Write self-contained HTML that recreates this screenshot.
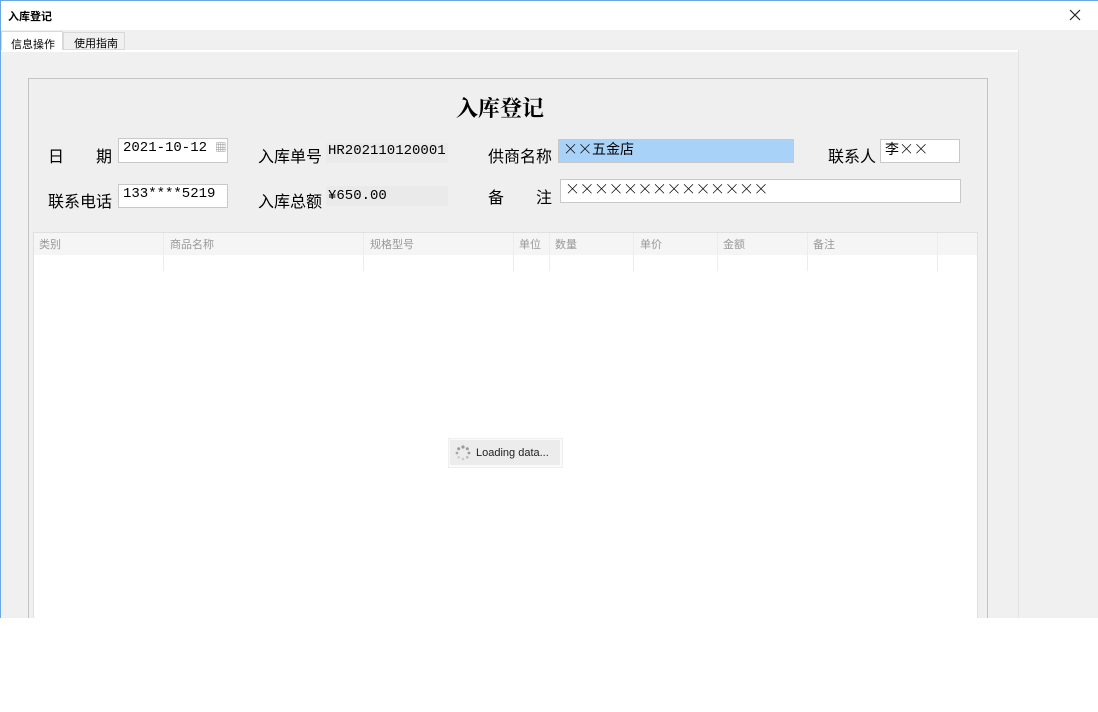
<!DOCTYPE html>
<html><head><meta charset="utf-8"><style>
*{margin:0;padding:0;box-sizing:border-box}
body{width:1098px;height:712px;background:#fff;position:relative;overflow:hidden;font-family:"Liberation Sans","Noto Sans CJK SC",sans-serif;}
.a{position:absolute}
.t{font-size:16px;color:#000;white-space:nowrap}
.box{position:absolute;background:#fff;border:1px solid #c8c8c8;font-size:14px;padding-left:4px;line-height:18px;white-space:nowrap;font-family:"Liberation Mono","Noto Sans CJK SC",monospace}
.x{font-family:"Noto Sans CJK SC",sans-serif;font-size:15px;font-weight:300;letter-spacing:-0.5px}
.hd{position:absolute;top:236px;font-size:11px;color:#999}
.sep{position:absolute;top:233px;width:1px;height:38px;background:#ececec}
</style></head><body>
<div class="a" style="left:0;top:0;width:1098px;height:1px;background:#6aa8e0"></div>
<div class="a" style="left:0;top:0;width:1px;height:618px;background:#6aa8e0"></div>
<div class="a t" style="left:8px;top:8px;font-size:11px;font-weight:bold">入库登记</div>
<svg class="a" style="left:1069px;top:9px" width="12" height="12"><path d="M1 1L11 11M11 1L1 11" stroke="#222" stroke-width="1.2"/></svg>
<div class="a" style="left:1px;top:30px;width:1097px;height:588px;background:#f0f0f0"></div>
<div class="a" style="left:1px;top:31px;width:62px;height:21px;background:#fff;border:1px solid #d9d9d9;border-bottom:none;font-size:11px;padding:4px 0 0 9px">信息操作</div>
<div class="a" style="left:63px;top:32px;width:62px;height:18px;background:#f0f0f0;border:1px solid #d9d9d9;font-size:11px;padding:2px 0 0 10px">使用指南</div>
<div class="a" style="left:1px;top:50px;width:1017px;height:2px;background:#fff"></div>
<div class="a" style="left:1018px;top:50px;width:1px;height:568px;background:#e3e3e3"></div>
<div class="a" style="left:28px;top:78px;width:960px;height:545px;border:1px solid #c4c4c4;background:#efefef"></div>
<div class="a" style="left:456px;top:92px;font-size:22px;font-weight:bold;font-family:'Noto Serif CJK SC',serif">入库登记</div>
<div class="a t" style="left:48px;top:143px">日</div><div class="a t" style="left:96px;top:143px">期</div>
<div class="box" style="left:118px;top:138px;width:110px;height:25px">2021-10-12 <span style="font-size:11px;color:#777">▦</span></div>
<div class="a t" style="left:258px;top:143px">入库单号</div>
<div class="a" style="left:326px;top:143px;width:122px;height:20px;background:#eaeaea;font-size:14px;font-family:'Liberation Mono',monospace;padding-left:2px">HR202110120001</div>
<div class="a t" style="left:488px;top:143px">供商名称</div>
<div class="box" style="left:558px;top:139px;width:236px;height:24px;background:#a9d2f8"><span class="x">××</span>五金店</div>
<div class="a t" style="left:828px;top:143px">联系人</div>
<div class="box" style="left:880px;top:139px;width:80px;height:24px">李<span class="x">××</span></div>
<div class="a t" style="left:48px;top:188px">联系电话</div>
<div class="box" style="left:118px;top:184px;width:110px;height:24px">133****5219</div>
<div class="a t" style="left:258px;top:188px">入库总额</div>
<div class="a" style="left:326px;top:186px;width:122px;height:20px;background:#eaeaea;font-size:14px;font-family:'Liberation Mono',monospace;padding-left:2px;padding-top:2px">¥650.00</div>
<div class="a t" style="left:488px;top:184px">备</div><div class="a t" style="left:536px;top:184px">注</div>
<div class="box" style="left:560px;top:179px;width:401px;height:24px"><span class="x">××××××××××××××</span></div>
<div class="a" style="left:33px;top:232px;width:945px;height:390px;background:#fff;border:1px solid #e0e0e0"></div>
<div class="a" style="left:34px;top:233px;width:943px;height:22px;background:#f5f5f5"></div>
<div class="sep" style="left:163px"></div><div class="sep" style="left:363px"></div><div class="sep" style="left:513px"></div><div class="sep" style="left:549px"></div><div class="sep" style="left:633px"></div><div class="sep" style="left:717px"></div><div class="sep" style="left:807px"></div><div class="sep" style="left:937px"></div>
<div class="hd" style="left:39px">类别</div><div class="hd" style="left:170px">商品名称</div><div class="hd" style="left:370px">规格型号</div><div class="hd" style="left:519px">单位</div><div class="hd" style="left:555px">数量</div><div class="hd" style="left:640px">单价</div><div class="hd" style="left:723px">金额</div><div class="hd" style="left:813px">备注</div>
<div class="a" style="left:448px;top:438px;width:115px;height:30px;border:1px solid #eee;background:#fafafa"></div>
<div class="a" style="left:450px;top:440px;width:110px;height:25px;background:#ececec;font-size:11px;padding:7px 0 0 26px;color:#222">Loading data...</div>
<svg class="a" style="left:455px;top:445px" width="16" height="16"><g fill="#999"><circle cx="8" cy="2" r="1.6"/><circle cx="12.3" cy="3.7" r="1.5"/><circle cx="14" cy="8" r="1.4"/><circle cx="12.3" cy="12.3" r="1.3" fill="#bbb"/><circle cx="8" cy="14" r="1.3" fill="#ccc"/><circle cx="3.7" cy="12.3" r="1.3" fill="#ccc"/><circle cx="2" cy="8" r="1.4" fill="#aaa"/><circle cx="3.7" cy="3.7" r="1.5"/></g></svg>
<div class="a" style="left:0;top:618px;width:1098px;height:94px;background:#fff"></div>
</body></html>
